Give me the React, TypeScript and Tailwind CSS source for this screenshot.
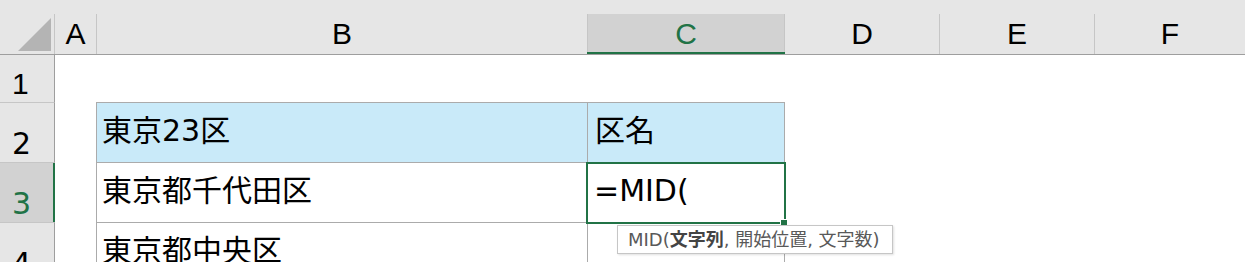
import React from "react";

const cellFont = { fontFamily: '"DejaVu Sans", "Noto Sans CJK JP", sans-serif' };

function ColHead({ label, w, selected, last }: { label: string; w: string; selected?: boolean; last?: boolean }) {
  return (
    <div
      className={`${w} h-[40px] flex items-center justify-center text-[30px] leading-none shrink-0 ${
        last ? "" : "border-r border-[#c6c6c6]"
      } ${selected ? "bg-[#d2d2d2] text-[#217346] relative" : "text-black"}`}
    >
      {label}
      {selected && <div className="absolute left-[-1px] right-[-1px] bottom-0 h-[2px] bg-[#217346]" />}
    </div>
  );
}

function RowHead({ n, h, top, selected }: { n: string; h: string; top?: boolean; selected?: boolean }) {
  return (
    <div
      className={`w-[55px] ${h} shrink-0 flex items-end pl-[12px] pb-[3px] text-[30px] leading-none border-r border-[#9e9e9e] relative ${
        top ? "border-t border-t-[#c6c6c6]" : ""
      } ${selected ? "bg-[#d2d2d2] text-[#217346]" : "bg-[#e6e6e6] text-black"}`}
    >
      {n}
      {selected && <div className="absolute right-[-1px] top-0 bottom-0 w-[2px] bg-[#217346]" />}
    </div>
  );
}

export default function App() {
  return (
    <div className="w-[1245px] h-[262px] overflow-hidden bg-white relative" style={{ fontFamily: '"Liberation Sans", sans-serif' }}>
      {/* Column header */}
      <div className="h-[55px] bg-[#e6e6e6] border-b border-[#9e9e9e] flex flex-col">
        <div className="h-[14px]" />
        <div className="flex h-[40px]">
          <div className="w-[55px] h-[40px] shrink-0 border-r border-[#c6c6c6] relative">
            <svg className="absolute left-[18px] top-[4px]" width="33" height="33" viewBox="0 0 33 33">
              <polygon points="33,0 33,33 0,33" fill="#b4b4b4" />
            </svg>
          </div>
          <ColHead label="A" w="w-[42px]" />
          <ColHead label="B" w="w-[491px]" />
          <ColHead label="C" w="w-[197px]" selected />
          <ColHead label="D" w="w-[155px]" />
          <ColHead label="E" w="w-[155px]" />
          <ColHead label="F" w="flex-1" last />
        </div>
      </div>

      {/* Row 1 */}
      <div className="flex h-[47px]">
        <RowHead n="1" h="h-[47px]" />
      </div>

      {/* Row 2 */}
      <div className="flex h-[60px]" style={cellFont}>
        <RowHead n="2" h="h-[60px]" top />
        <div className="w-[41px] shrink-0" />
        <div className="w-[492px] shrink-0 h-[60px] bg-[#c9eaf9] border-t border-l border-r border-[#ababab] flex items-center pl-[5px] pb-[3px] text-[30px] leading-none text-black">
          東京23区
        </div>
        <div className="w-[197px] shrink-0 h-[60px] bg-[#c9eaf9] border-t border-r border-[#ababab] flex items-center pl-[7px] pb-[3px] text-[30px] leading-none text-black">
          区名
        </div>
      </div>

      {/* Row 3 */}
      <div className="flex h-[60px]" style={cellFont}>
        <RowHead n="3" h="h-[60px]" top selected />
        <div className="w-[41px] shrink-0" />
        <div className="w-[492px] shrink-0 h-[60px] border-t border-l border-r border-[#ababab] flex items-center pl-[5px] pb-[3px] text-[30px] leading-none text-black">
          東京都千代田区
        </div>
        <div className="w-[197px] shrink-0 h-[60px] border-t border-r border-[#ababab] flex items-center pl-[6px] pb-[3px] text-[30px] leading-none text-black relative">
          =MID(
          <div className="absolute left-[-2px] top-[-1px] right-[-2px] bottom-[-2px] border-2 border-[#217346]" />
          <div className="absolute right-[-3px] bottom-[-4px] w-[6px] h-[6px] bg-[#217346] outline outline-1 outline-white" />
        </div>
      </div>

      {/* Row 4 */}
      <div className="flex h-[60px]" style={cellFont}>
        <RowHead n="4" h="h-[60px]" top />
        <div className="w-[41px] shrink-0" />
        <div className="w-[492px] shrink-0 h-[60px] border-t border-l border-r border-[#ababab] flex items-center pl-[5px] pb-[3px] text-[30px] leading-none text-black">
          東京都中央区
        </div>
        <div className="w-[197px] shrink-0 h-[60px] border-t border-r border-[#ababab]" />
      </div>

      {/* Tooltip */}
      <div
        className="absolute left-[617px] top-[225px] w-[276px] h-[29px] bg-white border border-[#c6c6c6] shadow-[1px_1px_2px_rgba(0,0,0,0.12)] flex items-center pl-[10px] text-[18px] leading-none text-[#595959] whitespace-nowrap"
        style={cellFont}
      >
        MID(<span className="font-bold text-[#444]">文字列</span>, 開始位置, 文字数)
      </div>
    </div>
  );
}
